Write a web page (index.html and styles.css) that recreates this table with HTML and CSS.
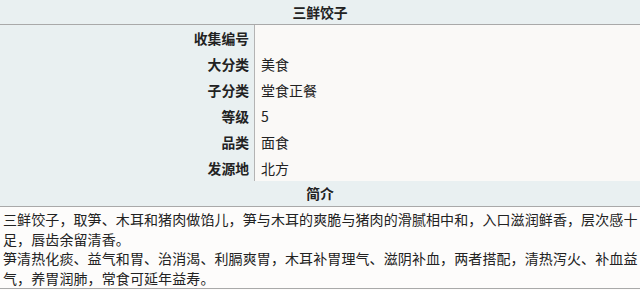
FILE: index.html
```html
<!DOCTYPE html>
<html lang="zh">
<head>
<meta charset="utf-8">
<link rel="stylesheet" href="styles.css">
</head>
<body>
<div class="info">
  <div class="title">三鲜饺子</div>
  <div class="row"><div class="label">收集编号</div><div class="value"></div></div>
  <div class="row"><div class="label">大分类</div><div class="value">美食</div></div>
  <div class="row"><div class="label">子分类</div><div class="value">堂食正餐</div></div>
  <div class="row"><div class="label">等级</div><div class="value">5</div></div>
  <div class="row"><div class="label">品类</div><div class="value">面食</div></div>
  <div class="row"><div class="label">发源地</div><div class="value">北方</div></div>
  <div class="section">简介</div>
  <div class="desc">三鲜饺子，取笋、木耳和猪肉做馅儿，笋与木耳的爽脆与猪肉的滑腻相中和，入口滋润鲜香，层次感十足，唇齿余留清香。<br>笋清热化痰、益气和胃、治消渴、利膈爽胃，木耳补胃理气、滋阴补血，两者搭配，清热泻火、补血益气，养胃润肺，常食可延年益寿。</div>
</div>
</body>
</html>
```
FILE: styles.css
```css
html, body {
  margin: 0;
  padding: 0;
  background: #fdfcfb;
}
.info {
  width: 640px;
  font-family: "Noto Sans CJK SC", "Noto Sans", sans-serif;
  font-size: 14px;
  color: #222;
}
.title, .section {
  height: 24px;
  line-height: 24px;
  text-align: center;
  font-weight: 700;
  font-size: 13.8px;
  background: #e9f0f1;
  border-bottom: 1px solid #a9a9a9;
}
.section {
  height: 25px;
  line-height: 25px;
}
.row {
  display: grid;
  grid-template-columns: 255px 1fr;
  height: 25px;
  border-bottom: 1px solid #a9a9a9;
}
.label {
  background: #e9f0f1;
  border-right: 1px solid #b4b4b4;
  text-align: right;
  font-weight: 700;
  font-size: 13.8px;
  padding-right: 5px;
  line-height: 26px;
}
.value {
  background: #faf9f7;
  padding-left: 6px;
  line-height: 26px;
}
.desc {
  padding: 3px 0 0 3px;
  height: 78px;
  line-height: 19.5px;
  letter-spacing: 0.1px;
  border-bottom: 1px solid #a9a9a9;
  background: #fdfcfb;
}
```
